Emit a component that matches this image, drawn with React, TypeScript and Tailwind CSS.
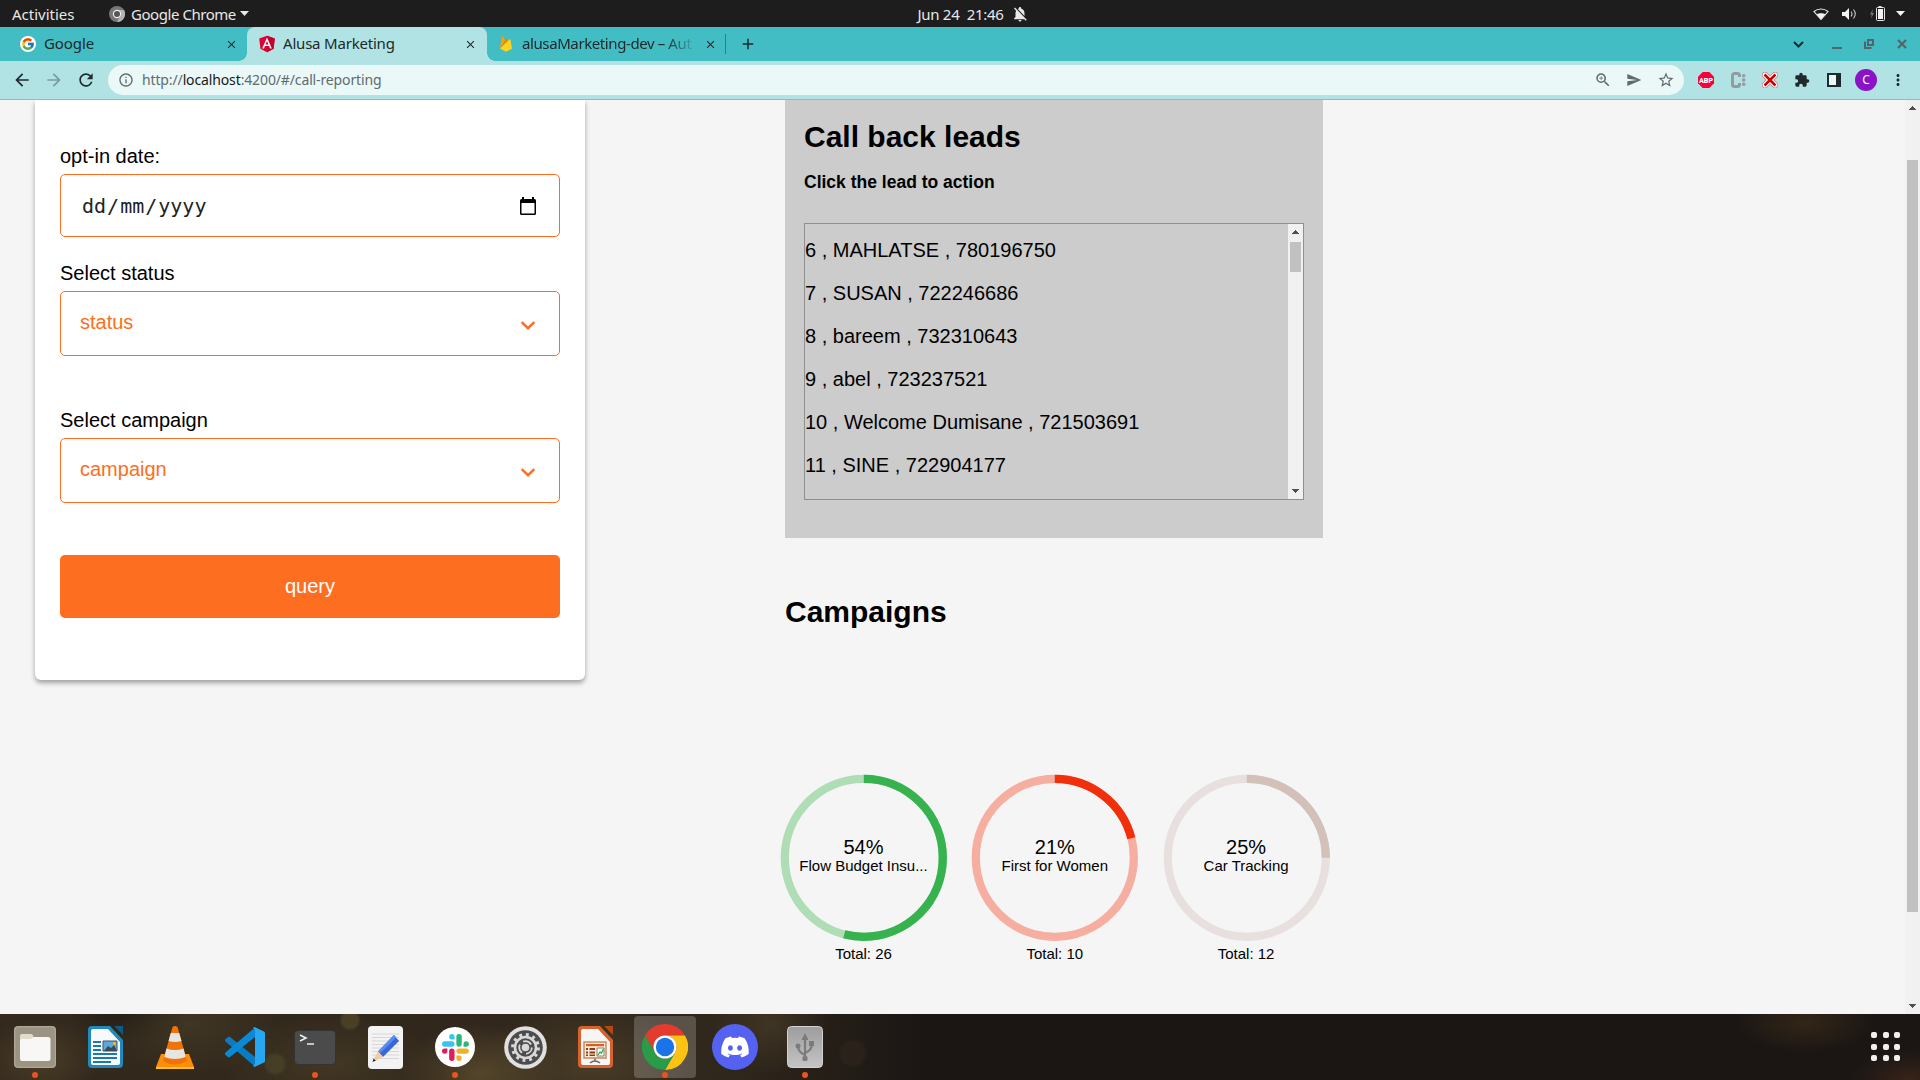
import React from "react";
import {
  MdArrowBack, MdArrowForward, MdRefresh, MdInfoOutline, MdZoomIn, MdSend,
  MdStarBorder, MdExtension, MdMoreVert, MdClose, MdAdd, MdNotificationsOff,
} from "react-icons/md";
import { FcGoogle } from "react-icons/fc";
import { FaDiscord } from "react-icons/fa";

const UI = "font-['Noto_Sans',sans-serif]";

function Angular() {
  return (
    <svg className="size-[18px]" viewBox="22 22 206 216">
      <path fill="#DD0031" d="M125 30L31.9 63.2l14.2 123.1L125 230l78.9-43.7 14.2-123.1z" />
      <path fill="#C3002F" d="M125 30V230l78.9-43.7 14.2-123.1L125 30z" />
      <path fill="#FFF" d="M125 52.1L66.8 182.6h21.7l11.7-29.2h49.4l11.7 29.2H183L125 52.1zm17 83.3h-34l17-40.9 17 40.9z" />
    </svg>
  );
}

function Firebase() {
  return (
    <svg className="h-4 w-3" viewBox="0 0 24 32">
      <path fill="#FFA000" d="M0 25 4.2 1.2c.2-.9 1.2-1 1.6-.3L10.400 9.200z" />
      <path fill="#F57C00" d="M0 25 12.500 6c.4-.7 1-.7 1.400 0L15.500 11z" />
      <path fill="#FFD21c" d="M24 25.300 20.900 7.200c-.1-.8-1-1.100-1.500-.5L0 25l10.800 5.900c.8.4 1.700.4 2.400 0z" />
    </svg>
  );
}

function TopBar() {
  return (
    <header className="grid h-[27px] grid-cols-[1fr_auto_1fr] items-center bg-[#1d1d1d] text-[15px] leading-[26px] text-[#e8e8e8]">
      <div className="flex items-center pl-3">
        <span className="w-[97px]">Activities</span>
        <svg className="mr-[6px] size-4" viewBox="0 0 16 16">
          <circle cx="8" cy="8" r="8" fill="#777" />
          <path d="M8 4h7A8 8 0 0 1 8 16l3.500-6z" fill="#b4b4b4" />
          <circle cx="8" cy="8" r="3.600" fill="#555" stroke="#eee" strokeWidth="1.200" />
        </svg>
        <span className="w-[109px] tracking-[-0.45px]">Google Chrome</span>
        <svg className="h-[5px] w-[9px]" viewBox="0 0 9 5"><path d="M0 0h9L4.500 5z" fill="#e8e8e8" /></svg>
      </div>
      <div className="flex items-center gap-2 pl-[27px]">
        <span className="tracking-[-0.3px] whitespace-pre">Jun 24  21:46</span>
        <MdNotificationsOff className="size-[18px] text-[#e8e8e8]" />
      </div>
      <div className="flex items-center justify-end pr-[15px]">
        <svg className="mr-[13px] h-3 w-4" viewBox="0 0 16 12">
          <path d="M1 3.500C5 .2 11 .2 15 3.500L8 11.500z" fill="none" stroke="#e8e8e8" strokeWidth="1.100" />
          <path d="M3.800 6.300C6 4.900 10 4.900 12.200 6.300L8 11.500z" fill="#f2f2f2" />
        </svg>
        <svg className="mr-[13px] h-3 w-[15px]" viewBox="0 0 15 12">
          <path d="M0 4h3l4-4v12l-4-4H0z" fill="#f2f2f2" />
          <path d="M9 3.500q2 2.500 0 5M11.500 1.500q3.500 4.500 0 9" fill="none" stroke="#cfcfcf" strokeWidth="1.100" />
        </svg>
        <svg className="mr-[11px] h-[15px] w-[15px]" viewBox="0 0 15 15">
          <path d="M3 3 0 8.500h1.800L1 12.500l3-5.500H2.200z" fill="#777" />
          <path d="M8.500 0h3v1.500h-3z" fill="#e8e8e8" />
          <rect x="6.500" y="1.500" width="8" height="13" rx="1" fill="none" stroke="#e8e8e8" />
          <path d="M8 3h5v10H8z" fill="#f2f2f2" />
        </svg>
        <svg className="h-[5px] w-[9px]" viewBox="0 0 9 5"><path d="M0 0h9L4.500 5z" fill="#f2f2f2" /></svg>
      </div>
    </header>
  );
}

function TabStrip() {
  return (
    <div className="flex h-[34px] items-center bg-[#43bdc4] text-[15px] text-[#20292b]">
      <div className="flex h-full w-[247px] items-center pr-[9px] pl-5">
        <span className="flex size-4 items-center justify-center rounded-full bg-white"><FcGoogle className="size-[14px]" /></span>
        <span className="mb-[2px] ml-2 flex-1 tracking-[-0.1px]">Google</span>
        <MdClose className="size-[13px]" />
      </div>
      <div className="relative flex h-full w-[240px] items-center rounded-t-lg bg-[#b1e3e4] pr-[10px] pl-[11px]">
        <span className="absolute bottom-0 -left-2 size-2 bg-[radial-gradient(circle_at_0_0,#43bdc4_7.500px,#b1e3e4_8px)]" />
        <span className="absolute -right-2 bottom-0 size-2 bg-[radial-gradient(circle_at_100%_0,#43bdc4_7.500px,#b1e3e4_8px)]" />
        <Angular />
        <span className="mb-[2px] ml-[7px] flex-1 tracking-[-0.2px]">Alusa Marketing</span>
        <MdClose className="size-[13px]" />
      </div>
      <div className="flex h-full w-[239px] items-center pl-[13px]">
        <Firebase />
        <span className="mb-[2px] ml-[10px] w-[174px] tracking-[-0.4px] whitespace-nowrap [mask-image:linear-gradient(to_right,#000_142px,transparent_176px)]">
          alusaMarketing-dev – Aut
        </span>
        <MdClose className="ml-[8px] size-[13px]" />
      </div>
      <span className="mr-[13px] ml-[-1px] h-5 w-px bg-[#2c7f84]" />
      <MdAdd className="size-[18px]" />
      <div className="ml-auto flex items-center text-[#56646a]">
        <svg className="mr-7 h-[7px] w-[11px]" viewBox="0 0 11 7"><path d="m1 1 4.500 4.500L10 1" fill="none" stroke="#20292b" strokeWidth="2" /></svg>
        <span className="mt-2 mr-[22px] h-[2px] w-[10px] bg-[#56646a]" />
        <svg className="mr-[23px] size-[10px]" viewBox="0 0 10 10" fill="none" stroke="#56646a" strokeWidth="2">
          <path d="M4 1h5v5H4zM1 2.500V9h6.500" />
        </svg>
        <svg className="mr-[13px] size-[10px]" viewBox="0 0 10 10"><path d="m1 1 8 8M9 1 1 9" stroke="#56646a" strokeWidth="2.200" /></svg>
      </div>
    </div>
  );
}

function Toolbar() {
  return (
    <div className="flex h-[39px] items-center border-b border-[#8dbcbe] bg-[#b1e3e4] pl-3 text-[#20292b]">
      <MdArrowBack className="mr-3 size-5" />
      <MdArrowForward className="mr-3 size-5 text-[#7b9c9e]" />
      <MdRefresh className="mr-3 size-5" />
      <div className="flex h-[30px] w-[1576px] items-center rounded-full bg-[#eaf8f8] pr-[9px] pl-[10px] text-[#5f6b6e]">
        <MdInfoOutline className="mr-2 size-4" />
        <span className="mb-px flex-1 text-[14px] tracking-[-0.13px]">http://<span className="text-[#15191a]">localhost</span>:4200/#/call-reporting</span>
        <MdZoomIn className="mr-[14px] size-[18px]" />
        <MdSend className="mr-[15px] size-4" />
        <MdStarBorder className="size-[18px]" />
      </div>
      <svg className="ml-[14px] size-4" viewBox="0 0 16 16">
        <path d="M4.700 0h6.600L16 4.700v6.600L11.300 16H4.700L0 11.300V4.700z" fill="#f7003a" />
        <text x="8" y="10.900" textAnchor="middle" className="font-['Roboto',sans-serif] text-[8px] font-black" fill="#fff" textLength="14" lengthAdjust="spacingAndGlyphs">ABP</text>
      </svg>
      <svg className="ml-[17px] h-4 w-[15px]" viewBox="0 0 15 16">
        <path d="M8.500 5V3.500a2 2 0 0 0-2-2H3.500a2 2 0 0 0-2 2v9a2 2 0 0 0 2 2h3a2 2 0 0 0 2-2V11" fill="none" stroke="#949c9d" strokeWidth="3" />
        <g fill="#949c9d"><circle cx="12.700" cy="3.800" r="1.800" /><circle cx="12.700" cy="8" r="1.800" /><circle cx="12.700" cy="12.200" r="1.800" /></g>
      </svg>
      <svg className="ml-4 size-4" viewBox="0 0 16 16">
        <path d="m3 3 10 10M13 3 3 13" stroke="#c77" strokeWidth="6.200" strokeLinecap="round" />
        <path d="m3 3 10 10M13 3 3 13" stroke="#fff" strokeWidth="4.800" strokeLinecap="round" />
        <path d="m2.500 2.500 11 11M13.500 2.500l-11 11" stroke="#c80000" strokeWidth="2.500" />
      </svg>
      <MdExtension className="ml-4 size-4" />
      <svg className="ml-[17px] size-[14px]" viewBox="0 0 14 14"><path d="M1 1h12v12H1z" fill="#eaf8f8" stroke="#20292b" strokeWidth="2" /><path d="M9 1h4v12H9z" fill="#20292b" /></svg>
      <span className="ml-[14px] flex size-[22px] items-center justify-center rounded-full bg-[#8c12c6] text-[12px] text-white">C</span>
      <MdMoreVert className="ml-3 size-[18px]" />
    </div>
  );
}

function Arrow({ down = false }: { down?: boolean }) {
  return (
    <svg className={down ? "h-1 w-[7px] rotate-180" : "h-1 w-[7px]"} viewBox="0 0 7 4" shapeRendering="crispEdges">
      <path d="M3 0h1v1h1v1h1v1h1v1H0V3h1V2h1V1h1z" fill="#505050" />
    </svg>
  );
}

function SelectBox({ label }: { label: string }) {
  return (
    <div className="flex h-[65px] w-[500px] items-center justify-between rounded-[5px] border border-[#fe6e20] pr-[23px] pl-[19px] text-[#fe6e20]">
      <span className="mb-[3px] leading-6">{label}</span>
      <svg className="mt-[3px] h-[9px] w-4" viewBox="0 0 16 9"><path d="m1.700 1.200 6.300 6 6.300-6" fill="none" stroke="#fe6e20" strokeWidth="2.500" /></svg>
    </div>
  );
}

function QueryForm() {
  return (
    <section className="h-[580px] w-[550px] shrink-0 rounded-b-[6px] bg-white px-[25px] pt-11 text-[20px] shadow-[0_3px_5px_rgba(0,0,0,0.35)]">
      <div className="mb-[6px] leading-6">opt-in date:</div>
      <div className="flex h-[63px] w-[500px] items-center justify-between rounded-[5px] border border-[#fe6e20] pr-[23px] pl-5 text-[#222]">
        <span className="font-['DejaVu_Sans_Mono',monospace] leading-6">
          <span className="px-px">dd</span>/<span className="px-px">mm</span>/<span className="px-px">yyyy</span>
        </span>
        <svg className="h-[18px] w-4" viewBox="0 0 16 18">
          <path d="M2 0h2v2h8V0h2v2h.5A1.500 1.500 0 0 1 16 3.500v13a1.500 1.500 0 0 1-1.500 1.500h-13A1.500 1.500 0 0 1 0 16.500v-13A1.500 1.500 0 0 1 1.500 2H2zM1.500 6v10.500h13V6z" fill="#000" />
        </svg>
      </div>
      <div className="mt-6 mb-[6px] leading-6">Select status</div>
      <SelectBox label="status" />
      <div className="mt-[52px] mb-[6px] leading-6">Select campaign</div>
      <SelectBox label="campaign" />
      <button className="mt-[52px] h-[63px] w-[500px] rounded-[5px] bg-[#fe6e20] pb-[2px] text-white">query</button>
    </section>
  );
}

const leads = [
  "6 , MAHLATSE , 780196750", "7 , SUSAN , 722246686", "8 , bareem , 732310643",
  "9 , abel , 723237521", "10 , Welcome Dumisane , 721503691", "11 , SINE , 722904177",
];

function LeadsPanel() {
  return (
    <section className="h-[438px] w-[538px] bg-[#ccc] px-[19px] pt-[19px]">
      <h2 className="text-[30px] leading-9 font-bold">Call back leads</h2>
      <h4 className="mt-[17px] text-[17.500px] leading-5 font-bold">Click the lead to action</h4>
      <div className="mt-[31px] flex h-[277px] w-[500px] border border-[#8f8f8f]">
        <ul className="flex-1 pt-[5px] text-[20px]">
          {leads.map((l) => <li key={l} className="h-[43px] leading-[43px]">{l}</li>)}
        </ul>
        <div className="flex w-[15px] flex-col items-center bg-[#f1f1f1] pt-[6px] pb-[6px]">
          <Arrow />
          <span className="mt-2 mb-auto h-[30px] w-[11px] bg-[#c1c1c1]" />
          <Arrow down />
        </div>
      </div>
    </section>
  );
}

const campaigns = [
  { pct: 54, name: "Flow Budget Insu...", total: 26, color: "#36b24f", track: "#afddb5" },
  { pct: 21, name: "First for Women", total: 10, color: "#f1300b", track: "#f6aea0" },
  { pct: 25, name: "Car Tracking", total: 12, color: "#d2c0b9", track: "#e8e0de" },
];

function Campaigns() {
  return (
    <section>
      <h2 className="mt-[56px] text-[30px] leading-9 font-bold">Campaigns</h2>
      <div className="mt-[144px] -ml-[5px] flex gap-[24.300px]">
        {campaigns.map((c) => (
          <div key={c.name} className="w-[167px] text-center">
            <div className="grid h-[167px] place-items-center">
              <svg className="size-[167px] -rotate-90 [grid-area:1/1]" viewBox="0 0 167 167" fill="none" strokeWidth="8.300">
                <circle cx="83.200" cy="83.800" r="79" stroke={c.track} />
                <circle cx="83.200" cy="83.800" r="79" stroke={c.color} pathLength="100" strokeDasharray={`${c.pct} 100`} />
              </svg>
              <div className="pb-1 [grid-area:1/1]">
                <div className="text-[20px] leading-[20px]">{c.pct}%</div>
                <div className="text-[15px] leading-[17px]">{c.name}</div>
              </div>
            </div>
            <div className="mt-1 text-[15px] leading-[18px]">Total: {c.total}</div>
          </div>
        ))}
      </div>
    </section>
  );
}

const FilesIcon = (
  <svg className="size-[42px]" viewBox="0 0 42 42">
    <rect width="42" height="42" rx="4" fill="#9c9483" /><rect x=".7" y=".7" width="40.600" height="40.600" rx="3.500" fill="none" stroke="#b4ad9f" />
    <path d="M6 10q0-2 2-2h9q1.500 0 2 1.500l.5 1.500H33v8H6z" fill="#e2dccf" />
    <path d="M6 15q0-2 2-2h9l3-2h14q2.500 0 2.500 2v20q0 2-2 2H8q-2 0-2-2z" fill="#f8f7f5" />
  </svg>
);
const WriterIcon = (
  <svg className="ml-px h-[42px] w-[35px]" viewBox="0 0 35 42">
    <path d="M4 0h18l13 14v24q0 4-4 4H4q-4 0-4-4V4q0-4 4-4z" fill="#2089bd" />
    <path d="M3 5q0-2 2-2h15l12 13v21q0 2-2 2H5q-2 0-2-2z" fill="#f7f9fb" />
    <path d="M26 0h9v9z" fill="#0d5c87" />
    <g fill="#1d79ab"><path d="M5 15h8v2H5zM5 19h8v2H5zM5 23h8v2H5zM5 27h24v2H5zM5 31h24v2H5zM5 35h18v2H5z" /></g>
    <path d="M15 15h14v10H15z" fill="#5ba9dc" stroke="#456" /><path d="m16 25 4-5 3 2 3-3 3 6z" fill="#3d4b52" /><circle cx="26.500" cy="17.500" r="1.500" fill="#f5c400" />
  </svg>
);
const VlcIcon = (
  <svg className="h-[43px] w-[38px]" viewBox="0 0 38 43">
    <path d="M5 28h28l5 13v2H0v-2z" fill="#fd8d0a" /><path d="M0 41h38v2H0z" fill="#ffc22a" />
    <path d="M16.500 1q2.500-2 5 0L31 35q-12 7-24 0z" fill="#ef7305" />
    <path d="M14.800 7h8.400l2.300 8q-6.500 2-13 0zM10.500 22.500q8.500 3 17 0l2.200 8.500q-10.700 4-21.400 0z" fill="#e6e5e3" />
  </svg>
);
const VscodeIcon = (
  <svg className="size-10" viewBox="0 0 40 40">
    <path d="M0 12.500 3 10q1-.5 2 0l25 20v9.500L1 15q-1.500-1.200-1-2.500z" fill="#0a7cc4" />
    <path d="M0 27.500 3 30q1 .5 2 0l25-20V.5L1 25q-1.500 1.200-1 2.500z" fill="#0a8ad6" />
    <path d="M30 .2 39 4.500q1 .5 1 1.500v28q0 1-1 1.500l-9 4.300q-1.200.3-2-1l2-1.500v-35L28 1q.8-1.200 2-.8z" fill="#27a7f2" />
  </svg>
);
const TerminalIcon = (
  <svg className="h-[35px] w-[42px]" viewBox="0 0 42 35">
    <rect x=".5" y=".5" width="41" height="34" rx="3.500" fill="#4b4b4b" stroke="#333" />
    <path d="m6 5 6 3-6 3M13 14h7" fill="none" stroke="#eee" strokeWidth="1.600" />
  </svg>
);
const EditorIcon = (
  <svg className="h-[43px] w-[35px]" viewBox="0 0 35 43">
    <rect width="35" height="43" rx="4" fill="#f3f3f3" />
    <path d="M4 8h27M4 11.500h27M4 15h27M4 18.500h27M4 22h27M4 25.500h27M4 29h27M4 32.500h27" stroke="#cfcfcf" strokeWidth=".8" />
    <path d="m26 9 5 6-16 16-5-5.500z" fill="#3668d8" /><path d="m26 9 2 2.500-16 16-2-2z" fill="#5b8af0" /><path d="m10 25.500 5 5.500-7 3.500-3 1 1-3z" fill="#f3cba1" /><path d="m5.600 32.800 2.300 1.800L4.500 36z" fill="#222" />
  </svg>
);
const SlackIcon = (
  <span className="flex size-10 items-center justify-center rounded-full bg-white">
    <svg className="size-[27px]" viewBox="0 0 54 54">
      <path fill="#36C5F0" d="M19.700.100a5.400 5.400 0 0 0 0 10.800h5.400V5.500A5.400 5.400 0 0 0 19.700.100m0 14.400H5.400a5.400 5.400 0 0 0 0 10.800h14.300a5.400 5.400 0 0 0 0-10.800" />
      <path fill="#2EB67D" d="M53.800 19.900a5.400 5.400 0 1 0-10.800 0v5.400h5.400a5.400 5.400 0 0 0 5.400-5.400m-14.300 0V5.500a5.400 5.400 0 1 0-10.800 0v14.400a5.400 5.400 0 1 0 10.800 0" />
      <path fill="#ECB22E" d="M34.100 54a5.400 5.400 0 1 0 0-10.800h-5.400v5.400a5.400 5.400 0 0 0 5.400 5.400m0-14.400h14.300a5.400 5.400 0 0 0 0-10.800H34.100a5.400 5.400 0 0 0 0 10.800" />
      <path fill="#E01E5A" d="M0 34.200a5.400 5.400 0 1 0 10.800 0v-5.400H5.400A5.400 5.400 0 0 0 0 34.200m14.300 0v14.400a5.400 5.400 0 1 0 10.800 0V34.200a5.400 5.400 0 1 0-10.800 0" />
    </svg>
  </span>
);
const SettingsIcon = (
  <svg className="size-[43px]" viewBox="0 0 43 43">
    <circle cx="21.500" cy="21.500" r="21.300" fill="#e0e0e0" /><circle cx="21.500" cy="21.500" r="17.300" fill="#4c4c4c" />
    <circle cx="21.500" cy="21.500" r="12.800" fill="none" stroke="#d8d8d8" strokeWidth="3.200" strokeDasharray="2.900 3.802" />
    <circle cx="21.500" cy="21.500" r="10.500" fill="none" stroke="#d8d8d8" strokeWidth="2.600" />
    <circle cx="21.500" cy="21.500" r="6.300" fill="none" stroke="#d8d8d8" strokeWidth="1.800" strokeDasharray="9 4.190" />
    <circle cx="21.500" cy="21.500" r="3.800" fill="#d8d8d8" />
  </svg>
);
const ImpressIcon = (
  <svg className="h-[42px] w-[35px]" viewBox="0 0 35 42">
    <path d="M4 0h18l13 14v24q0 4-4 4H4q-4 0-4-4V4q0-4 4-4z" fill="#d7622d" />
    <path d="M3 5q0-2 2-2h15l12 13v21q0 2-2 2H5q-2 0-2-2z" fill="#f8f6f4" />
    <path d="M26 0h9v9z" fill="#b5480f" />
    <path d="M6 16h22v16H6z" fill="#fbe9dc" stroke="#c98a62" strokeWidth="1.500" />
    <path d="M8 18h18v2.200H8z" fill="#d5611f" />
    <path d="M8 22h2v2H8zM8 25.500h2v2H8zM8 28.500h2v1.500H8zM11.500 22H17v2h-5.500zM11.500 25.500H17v2h-5.500zM11.500 28.500H17V30h-5.500z" fill="#87400f" />
    <path d="M19 22h7v8h-7z" fill="#fff" stroke="#666" strokeWidth=".8" /><path d="m20 29 2-3 1.500 1 2-4" fill="none" stroke="#35a02c" strokeWidth="1.200" />
    <path d="M17 32.500v2M12 37q5-4 10 0" fill="none" stroke="#666" strokeWidth="1.500" />
  </svg>
);
const ChromeIcon = (
  <svg className="size-[46px]" viewBox="0 0 48 48">
    <path d="M3.200 12A24 24 0 0 1 44.800 12H24a12 12 0 0 0-10.400 18z" fill="#e33b2e" />
    <path d="M44.800 12A24 24 0 0 1 24 48l10.400-18A12 12 0 0 0 24 12z" fill="#fcc313" />
    <path d="M24 48A24 24 0 0 1 3.200 12l10.400 18a12 12 0 0 0 20.800 0z" fill="#2a9b48" />
    <circle cx="24" cy="24" r="12" fill="#fff" /><circle cx="24" cy="24" r="9.600" fill="#1a73e8" />
  </svg>
);
const DiscordIcon = (
  <span className="flex size-[46px] items-center justify-center rounded-full bg-[#5562f1] text-white"><FaDiscord className="size-[30px]" /></span>
);
const UsbIcon = (
  <svg className="h-[42px] w-9" viewBox="0 0 36 42">
    <defs><linearGradient id="usb" x2="0" y2="1"><stop stopColor="#9d9d9d" /><stop offset="1" stopColor="#c4c4c4" /></linearGradient></defs>
    <rect x=".5" y=".5" width="35" height="41" rx="4" fill="url(#usb)" stroke="#d2d2d2" />
    <g fill="none" stroke="#7b7b7b" strokeWidth="2.200"><path d="M18 12v20M18 29q-7-3-7-9M18 27q7-3 7-9" /></g>
    <g fill="#7b7b7b"><path d="m18 7 3.500 7h-7zM22 15h5v5h-5z" /><circle cx="11" cy="20" r="2.500" /><rect x="15.500" y="30" width="5" height="5" rx="1.500" /></g>
  </svg>
);

const dock = [
  { id: "files", icon: FilesIcon, running: true },
  { id: "writer", icon: WriterIcon },
  { id: "vlc", icon: VlcIcon },
  { id: "code", icon: VscodeIcon },
  { id: "terminal", icon: TerminalIcon, running: true },
  { id: "editor", icon: EditorIcon },
  { id: "slack", icon: SlackIcon, running: true },
  { id: "settings", icon: SettingsIcon },
  { id: "impress", icon: ImpressIcon },
  { id: "chrome", icon: ChromeIcon, running: true, active: true },
  { id: "discord", icon: DiscordIcon },
  { id: "usb", icon: UsbIcon, running: true },
];

function Dock() {
  return (
    <footer className="flex h-[66px] items-start justify-between bg-[#1b1614] bg-[radial-gradient(circle_11px_at_350px_6px,#5a4c2c99_70%,transparent),radial-gradient(circle_12px_at_275px_50px,#4f4a2a88_70%,transparent),radial-gradient(circle_15px_at_853px_39px,#2e261caa_70%,transparent),radial-gradient(ellipse_60px_40px_at_40px_45px,#5a4a2c99,transparent),radial-gradient(ellipse_90px_50px_at_190px_10px,#4c412a88,transparent),radial-gradient(ellipse_60px_30px_at_130px_0px,#14121099,transparent),radial-gradient(ellipse_110px_50px_at_330px_50px,#4d412899,transparent),radial-gradient(ellipse_80px_50px_at_480px_60px,#6b5a3499,transparent),radial-gradient(ellipse_110px_60px_at_590px_50px,#5a4b2e99,transparent),radial-gradient(ellipse_60px_50px_at_770px_10px,#4d402a99,transparent),radial-gradient(ellipse_70px_30px_at_1805px_8px,#43301a99,transparent),radial-gradient(ellipse_60px_30px_at_1910px_66px,#4a2c1c99,transparent),linear-gradient(to_right,#33291d,#30271c_38%,#1b1614_48%)]">
      <div className="flex">
        {dock.map((d) => (
          <div key={d.id} className="relative flex h-[66px] w-[70px] items-center justify-center">
            <span className={d.active ? "flex size-[62px] items-center justify-center rounded-[4px] bg-white/20" : "flex size-[62px] items-center justify-center"}>{d.icon}</span>
            {d.running && <span className="absolute bottom-[2px] left-8 size-[6px] rounded-full bg-[#e95420]" />}
          </div>
        ))}
      </div>
      <div className="mt-[18px] mr-5 grid grid-cols-3 gap-[5.500px]">
        {Array.from({ length: 9 }, (_, i) => <span key={i} className="size-[6px] rounded-[2px] bg-[#f2f0ee]" />)}
      </div>
    </footer>
  );
}

export default function App() {
  return (
    <div className="flex h-[1080px] w-[1920px] flex-col overflow-hidden">
      <div className={UI}>
        <TopBar />
        <TabStrip />
        <Toolbar />
      </div>
      <main className="flex h-[914px] bg-[#f5f5f5] font-['Liberation_Sans',Arial,sans-serif] text-black">
        <div className="flex flex-1 gap-[200px] overflow-hidden pl-[35px]">
          <QueryForm />
          <div>
            <LeadsPanel />
            <Campaigns />
          </div>
        </div>
        <div className="flex w-[15px] flex-col items-center bg-[#f1f1f1] pt-[6px] pb-[6px]">
          <Arrow />
          <span className="mt-[50px] mb-auto h-[752px] w-[11px] bg-[#c1c1c1]" />
          <Arrow down />
        </div>
      </main>
      <Dock />
    </div>
  );
}
